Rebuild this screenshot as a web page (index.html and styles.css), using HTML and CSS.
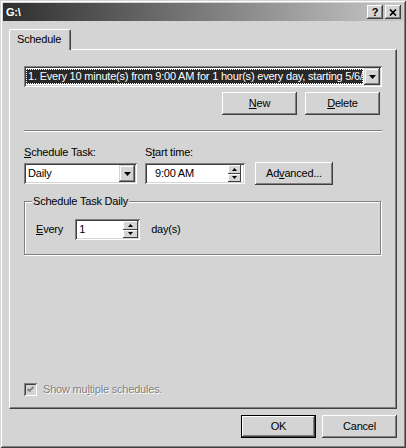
FILE: index.html
```html
<!DOCTYPE html>
<html>
<head>
<meta charset="utf-8">
<link rel="stylesheet" href="styles.css">
</head>
<body>
<div class="window">
  <div class="titlebar">
    <span class="title">G:\</span>
    <div class="caps">
      <span class="cap help">?</span>
      <span class="cap close"><svg width="8" height="7" viewBox="0 0 8 7"><path d="M1 0.5 L7 6.5 M7 0.5 L1 6.5" stroke="#000" stroke-width="1.7" fill="none"/></svg></span>
    </div>
  </div>
  <div class="client">
    <div class="tabs"><div class="tab">Schedule</div></div>
    <div class="panel">
      <div class="field combo-wide">
        <div class="combo-value sel"><span>1. Every 10 minute(s) from 9:00 AM for 1 hour(s) every day, starting 5/6/2002</span></div>
        <span class="dd"><svg width="7" height="4" viewBox="0 0 7 4"><path d="M0 0h7L3.5 4z" fill="#000"/></svg></span>
      </div>
      <div class="btn-row">
        <button class="btn"><u>N</u>ew</button>
        <button class="btn"><u>D</u>elete</button>
      </div>
      <div class="sep"></div>
      <div class="sched-grid">
        <span class="lbl"><u>S</u>chedule Task:</span>
        <span class="lbl">S<u>t</u>art time:</span>
        <span></span>
        <div class="field combo-daily">
          <div class="combo-value">Daily</div>
          <span class="dd"><svg width="7" height="4" viewBox="0 0 7 4"><path d="M0 0h7L3.5 4z" fill="#000"/></svg></span>
        </div>
        <div class="field time">
          <span class="time-val">9:00 AM</span>
          <span class="spin">
            <span class="spin-btn"><svg width="5" height="3" viewBox="0 0 5 3"><path d="M0 3h5L2.5 0z" fill="#000"/></svg></span>
            <span class="spin-btn"><svg width="5" height="3" viewBox="0 0 5 3"><path d="M0 0h5L2.5 3z" fill="#000"/></svg></span>
          </span>
        </div>
        <button class="btn adv">Ad<u>v</u>anced...</button>
      </div>
      <fieldset class="group">
        <legend>Schedule Task Daily</legend>
        <div class="every-row">
          <span class="every-lbl"><u>E</u>very</span>
          <div class="field num">
            <span class="num-val">1</span>
            <span class="spin buddy">
              <span class="spin-btn"><svg width="5" height="3" viewBox="0 0 5 3"><path d="M0 3h5L2.5 0z" fill="#000"/></svg></span>
              <span class="spin-btn"><svg width="5" height="3" viewBox="0 0 5 3"><path d="M0 0h5L2.5 3z" fill="#000"/></svg></span>
            </span>
          </div>
          <span class="days">day(s)</span>
        </div>
      </fieldset>
      <div class="check-row">
        <span class="check"><svg width="7" height="7" viewBox="0 0 7 7"><path d="M0.6 3 L2.5 4.9 L6.4 1" stroke="#808080" stroke-width="1.8" fill="none"/></svg></span>
        <span class="check-label">Show mu<u>l</u>tiple schedules.</span>
      </div>
    </div>
    <div class="footer">
      <button class="btn default">OK</button>
      <button class="btn">Cancel</button>
    </div>
  </div>
</div>
</body>
</html>
```
FILE: styles.css
```css
* { box-sizing: border-box; }
html, body { margin: 0; padding: 0; }
body {
  background: #d4d4d4;
  font-family: "Liberation Sans", Arial, sans-serif;
  font-size: 11px;
  line-height: 13px;
  letter-spacing: -0.2px;
  color: #000;
}
u { text-decoration: underline; text-underline-offset: 1px; }

.window {
  width: 406px;
  height: 448px;
  background: #d4d4d4;
  padding: 3px;
  display: flex;
  flex-direction: column;
  box-shadow: inset 1px 1px 0 #d4d4d4, inset -1px -1px 0 #404040, inset 2px 2px 0 #fff, inset -2px -2px 0 #808080;
}

.titlebar {
  height: 18px;
  flex: 0 0 18px;
  display: flex;
  align-items: center;
  justify-content: space-between;
  padding: 0 2px 0 3px;
  background: linear-gradient(to right, #2e2e2e, #c8c8c8);
}
.title { color: #fff; font-weight: bold; }
.caps { display: flex; gap: 2px; }
.cap {
  width: 16px;
  height: 14px;
  background: #d4d4d4;
  display: flex;
  align-items: center;
  justify-content: center;
  font-weight: bold;
  box-shadow: inset -1px -1px 0 #404040, inset 1px 1px 0 #fff, inset -2px -2px 0 #808080;
}

.client {
  flex: 1;
  display: flex;
  flex-direction: column;
  padding: 8px 6px 0 6px;
}

.tabs {
  display: flex;
  margin-bottom: -1px;
  position: relative;
  z-index: 1;
}
.tab {
  width: 62px;
  height: 21px;
  padding: 3px 0 0 7px;
  background: #d4d4d4;
  border-top: 1px solid #fff;
  border-left: 1px solid #fff;
  border-right: 1px solid #404040;
  border-top-left-radius: 2px;
  border-top-right-radius: 2px;
  box-shadow: inset -1px 0 0 #808080;
}

.panel {
  height: 360px;
  flex: 0 0 360px;
  border: 1px solid;
  border-color: #fff #404040 #404040 #fff;
  box-shadow: inset -1px -1px 0 #808080;
  padding: 16px 14px 12px 14px;
  display: flex;
  flex-direction: column;
}

.field {
  background: #fff;
  box-shadow: inset 1px 1px 0 #808080, inset -1px -1px 0 #fff, inset 2px 2px 0 #404040, inset -2px -2px 0 #d4d4d4;
  padding: 2px;
  display: flex;
  align-items: stretch;
}
.combo-wide { height: 21px; }
.combo-value {
  flex: 1;
  overflow: hidden;
  white-space: nowrap;
  padding-left: 2px;
  display: flex;
  align-items: center;
}
.sel {
  background: #282828;
  color: #fff;
  margin: 1px 1px 1px 0;
  outline: 1px dotted #fff;
  outline-offset: -1px;
  padding-left: 2px;
}
.dd {
  width: 16px;
  flex: 0 0 16px;
  background: #d4d4d4;
  display: flex;
  align-items: center;
  justify-content: center;
  box-shadow: inset -1px -1px 0 #404040, inset 1px 1px 0 #d4d4d4, inset -2px -2px 0 #808080, inset 2px 2px 0 #fff;
}

.btn-row {
  display: flex;
  justify-content: flex-end;
  gap: 8px;
  margin-top: 5px;
  padding-right: 2px;
}
.btn {
  width: 75px;
  height: 23px;
  padding: 0;
  border: 0;
  background: #d4d4d4;
  font: inherit;
  line-height: 13px;
  letter-spacing: inherit;
  color: #000;
  box-shadow: inset -1px -1px 0 #404040, inset 1px 1px 0 #fff, inset -2px -2px 0 #808080;
}

.sep {
  height: 2px;
  margin-top: 15px;
  border-top: 1px solid #808080;
  border-bottom: 1px solid #fff;
}

.sched-grid {
  display: grid;
  grid-template-columns: 121px 110px 78px;
  row-gap: 3px;
  margin-top: 14px;
  align-items: center;
}
.combo-daily { width: 113px; height: 21px; }
.time { width: 100px; height: 21px; align-items: center; }
.time-val { flex: 1; padding-left: 8px; }
.adv { width: 78px; }

.spin {
  width: 13px;
  height: 17px;
  margin-right: 2px;
  display: flex;
  flex-direction: column;
}
.spin-btn {
  flex: 1;
  background: #d4d4d4;
  display: flex;
  align-items: center;
  justify-content: center;
  box-shadow: inset -1px -1px 0 #404040, inset 1px 1px 0 #fff;
}

.group {
  width: 357px;
  margin: 10px 0 0 0;
  padding: 11px 11px 14px 11px;
  border: 1px solid #808080;
  box-shadow: inset 1px 1px 0 #fff, 1px 1px 0 #fff;
  min-width: 0;
}
.group legend {
  padding: 0 1px;
  margin-left: -4px;
  line-height: 13px;
  background: #d4d4d4;
}
.every-row {
  display: flex;
  align-items: center;
}
.every-lbl { margin-right: 12px; }
.num { width: 65px; height: 21px; margin-right: 11px; align-items: center; }
.num-val { flex: 1; padding-left: 2px; }
.buddy { width: 15px; margin-right: 0; }

.check-row {
  margin-top: auto;
  display: flex;
  align-items: center;
  gap: 6px;
}
.check {
  width: 13px;
  height: 13px;
  background: #d4d4d4;
  display: flex;
  align-items: center;
  justify-content: center;
  box-shadow: inset 1px 1px 0 #808080, inset -1px -1px 0 #fff, inset 2px 2px 0 #404040, inset -2px -2px 0 #d4d4d4;
}
.check-label {
  color: #808080;
  text-shadow: 1px 1px 0 #fff;
}

.footer {
  display: flex;
  justify-content: flex-end;
  gap: 6px;
  margin-top: 6px;
}
.default {
  box-shadow: inset 0 0 0 1px #000, inset -2px -2px 0 #404040, inset 2px 2px 0 #fff, inset -3px -3px 0 #808080;
}
```
